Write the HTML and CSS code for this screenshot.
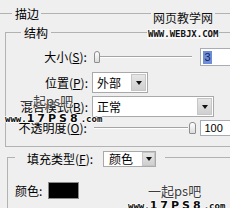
FILE: index.html
```html
<!DOCTYPE html>
<html lang="zh">
<head>
<meta charset="utf-8">
<link rel="stylesheet" href="styles.css">
</head>
<body>
<div class="dialog">
  <div class="title-row">
    <span class="rule rule-short"></span>
    <span class="title">描边</span>
    <span class="rule rule-grow"></span>
  </div>

  <div class="group group-structure">
    <div class="legend">结构</div>
    <div class="row row-size">
      <span class="label">大小(<u>S</u>):</span>
      <div class="slider">
        <span class="thumb thumb-start"></span>
        <span class="track track-size"></span>
      </div>
      <div class="num num-size"><span class="sel">3</span></div>
    </div>
    <div class="row row-pos">
      <span class="label">位置(<u>P</u>):</span>
      <div class="select select-pos"><span class="select-text">外部</span><span class="select-btn"><i class="tri"></i></span></div>
    </div>
    <div class="row row-blend">
      <span class="label">混合模式(<u>B</u>):</span>
      <div class="select select-blend"><span class="select-text">正常</span><span class="select-btn"><i class="tri"></i></span></div>
    </div>
    <div class="row row-opacity">
      <span class="label">不透明度(<u>O</u>):</span>
      <div class="slider">
        <span class="track track-opacity"></span>
        <span class="thumb thumb-end"></span>
      </div>
      <div class="num num-opacity">100</div>
    </div>
  </div>

  <div class="group group-fill">
    <div class="legend legend-fill">
      <span class="fill-label">填充类型(<u>F</u>):</span>
      <div class="select select-fill"><span class="select-text">颜色</span><span class="select-btn"><i class="tri"></i></span></div>
    </div>
    <div class="row row-color">
      <span class="color-label">颜色:</span>
      <span class="swatch"></span>
    </div>
  </div>

  <div class="wm wm-webjx-cn">网页教学网</div>
  <div class="wm wm-webjx-url">WWW.WEBJX.COM</div>
  <div class="wm wm-ps wm-ps-left">一起ps吧</div>
  <div class="wm wm-url wm-url-left"><span class="s">www.</span><span class="b">17PS8</span><span class="s">.com</span></div>
  <div class="wm wm-ps wm-ps-right">一起ps吧</div>
  <div class="wm wm-url wm-url-right"><span class="s">www.</span><span class="b">17PS8</span><span class="s">.com</span></div>
</div>
</body>
</html>
```

FILE: styles.css
```css
* { box-sizing: border-box; margin: 0; padding: 0; }
html, body { width: 230px; height: 208px; overflow: hidden; }
body {
  background: #efefef;
  font-family: "Noto Sans CJK SC", "Noto Sans", sans-serif;
  font-size: 12px;
  color: #000;
}
u { text-decoration: underline; text-underline-offset: 1px; }

.dialog { position: relative; width: 240px; height: 208px; }

.title-row { display: flex; align-items: center; height: 15px; margin-top: 6px; }
.rule { height: 1px; background: #b2b2b2; }
.rule-short { width: 12px; }
.rule-grow { flex: 1; }
.title { margin: 0 2px 0 3px; line-height: 15px; }

.group {
  display: flex;
  flex-direction: column;
  border: 1px solid #b2b2b2;
  border-right: none;
}
.group-structure { margin: 11px 0 0 5px; padding-bottom: 10px; }
.group-fill { margin: 10px 0 0 7px; border-bottom: none; height: 60px; }

.legend {
  align-self: flex-start;
  margin: -8px 0 0 15px;
  padding: 0 3px;
  background: #efefef;
  line-height: 15px;
}

.row { display: flex; align-items: center; }
.label { width: 82px; text-align: right; line-height: 14px; white-space: nowrap; }

.row-size { margin-top: 8px; height: 18px; }
.row-pos { margin-top: 6px; height: 21px; }
.row-blend { margin-top: 3px; height: 21px; }
.row-opacity { margin-top: 3px; height: 16px; }

.slider { display: flex; align-items: center; width: 105px; height: 14px; margin-left: 6px; }
.track { flex: 1; height: 2px; border-top: 1px solid #a4a4a4; border-bottom: 1px solid #ffffff; }
.track-size { margin-right: 4px; }
.track-opacity { margin-left: 1px; }
.thumb {
  width: 6px; height: 12px;
  border: 1px solid #8e8e8e;
  border-radius: 3px 3px 1px 1px;
  background: linear-gradient(#ffffff, #dcdcdc);
}
.thumb-start { margin-left: 1px; }
.thumb-end { margin: 0 0 0 1px; width: 7px; }

.num {
  display: flex; align-items: center;
  width: 40px; height: 100%;
  margin-left: 4px;
  background: #fff;
  border: 1px solid #a8acb4;
  font-family: "Liberation Sans", Arial, sans-serif;
  font-size: 11px;
  padding-left: 2px;
}
.num-size { height: 18px; }
.num-opacity { height: 16px; padding-left: 3px; }
.sel { background: #6d8ed6; color: #16245c; line-height: 13px; padding: 0 1px; }

.select {
  display: flex;
  height: 100%;
  margin-left: 4px;
  background: #fff;
  border: 1px solid #a9a9a9;
  padding: 1px;
}
.select-pos { width: 56px; }
.select-blend { width: 122px; }
.select-text { flex: 1; padding-left: 3px; line-height: 17px; white-space: nowrap; }
.select-btn {
  display: flex; align-items: center; justify-content: center;
  width: 15px;
  background: linear-gradient(#e6e6e6, #cfcfcf);
  border: 1px solid #c6c6c6;
}
.tri {
  width: 0; height: 0;
  border-left: 3.5px solid transparent;
  border-right: 3.5px solid transparent;
  border-top: 4px solid #111;
}

.legend-fill {
  display: flex; align-items: center;
  height: 16px;
  margin: -7px 0 0 7px;
  padding: 0 9px 0 12px;
}
.fill-label { line-height: 14px; white-space: nowrap; }
.select-fill { width: 53px; height: 16px; margin-left: 10px; padding: 0; }
.select-fill .select-text { line-height: 14px; padding-left: 5px; }
.select-fill .select-btn { width: 13px; }

.row-color { margin-top: 15px; height: 17px; }
.color-label { margin-left: 7px; line-height: 14px; }
.swatch { width: 31px; height: 17px; margin-left: 6px; background: #000; border: 1px solid #8a8a8a; }

/* watermarks overlaying the screenshot */
.wm { position: absolute; white-space: nowrap; }
.wm-webjx-cn { left: 151px; top: 4px; padding: 0 2px; background: #efefef; line-height: 15px; font-size: 12px; color: #111; }
.wm-webjx-url {
  display: flex; align-items: center;
  left: 147px; top: 23px; height: 10px; padding: 0 1px;
  background: #f8f8f8;
  font-family: "DejaVu Sans Mono", monospace; font-weight: bold;
  font-size: 9px; line-height: 10px; color: #111;
}
.wm-ps { font-size: 13px; line-height: 14px; color: #3c3c3c; text-shadow: 0 0 2px #fff, 0 0 1px #fff; }
.wm-ps-left { left: 20px; top: 88px; }
.wm-ps-right { left: 148px; top: 178px; }
.wm-url {
  display: flex; align-items: baseline;
  height: 11px;
  color: #0c0c0c; font-weight: bold;
  text-shadow: 1px 0 #fff, -1px 0 #fff, 0 1px #fff, 0 -1px #fff;
}
.wm-url .s { font-family: "DejaVu Sans Mono", monospace; font-size: 9px; line-height: 11px; }
.wm-url .b { font-family: "DejaVu Sans", sans-serif; font-size: 11px; line-height: 11px; letter-spacing: 3px; }
.wm-url-left { left: 5px; top: 107px; }
.wm-url-right { left: 128px; top: 194px; }
```
